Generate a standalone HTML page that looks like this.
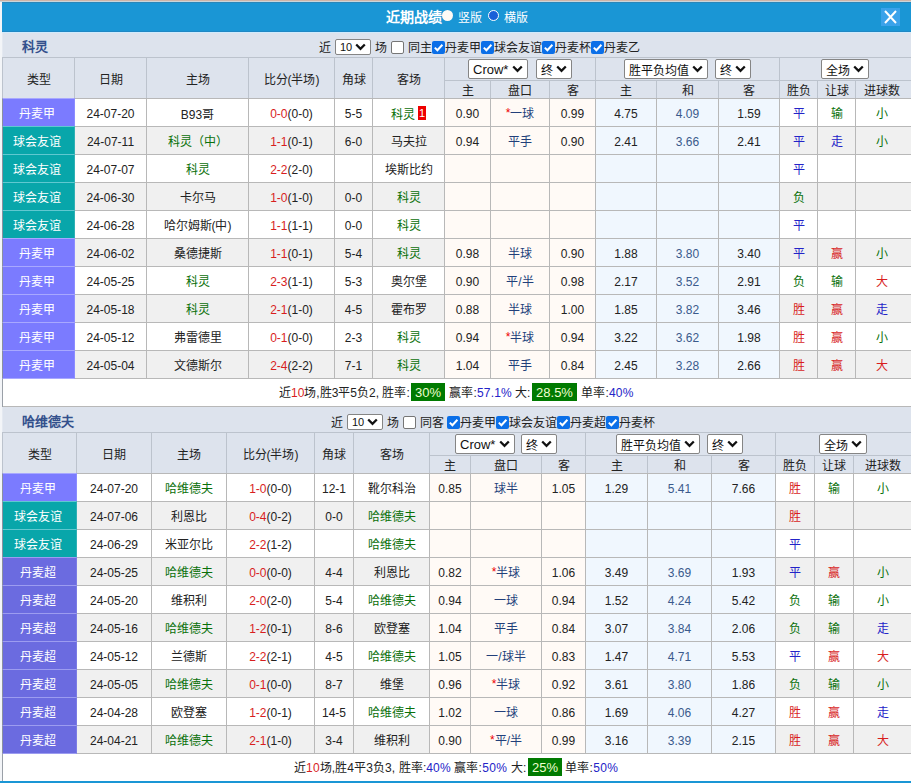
<!DOCTYPE html><html lang="zh-CN"><head><meta charset="utf-8"><style>
*{margin:0;padding:0;box-sizing:border-box}
html,body{width:911px;height:783px;overflow:hidden;background:#f3f5f8}
body{position:relative;font-family:"Liberation Sans",sans-serif;font-size:12px;color:#222}
.c{position:absolute;display:flex;align-items:center;justify-content:center;white-space:nowrap;border:1px solid #b8b8b8}
.d{padding-top:2px}
.h{background:#dde3ed;color:#222;font-size:12px;border-color:#bcc3cd}
.t1{background:#7b7bff;color:#fff;font-size:12px;border-color:#a8a8ff #8c8cff #a8a8ff #8a90a0;padding-right:3px}
.t2{background:#08a6aa;color:#fff;font-size:12px;border-color:#60c8d0 #30b0b4 #60c8d0 #8a90a0;padding-right:3px}
.t3{background:#6b6be0;color:#fff;font-size:12px;border-color:#9c9cf0 #7c7ce4 #9c9cf0 #8a90a0;padding-right:3px}
.w{background:#fff}
.g{background:#f0f0f0}
.ow{background:#fffaf6}
.ob{background:#f0f7fe}
.r{color:#d81e1e}
.gr{color:#0a700a}
.bl{color:#2323c8}
.pk{color:#223f7a}
.he{color:#3a5a8c}
.blk{position:absolute}
.sel{position:absolute;background:#fff;border:1px solid #858585;border-radius:2px;font-size:13px;color:#111;display:flex;align-items:center;padding-left:4px}
.sel svg{position:absolute;right:4px;top:50%;margin-top:-4px}
.cb{position:absolute;width:13px;height:13px;border-radius:2px}
.cb.on{background:#0b6fe8}
.cb.off{background:#fff;border:1px solid #767676}
.txt{position:absolute;white-space:nowrap;font-size:12px;color:#222;line-height:16px}
.badge{position:absolute;background:#007a00;color:#efffd0;font-size:13px;padding-top:1px;display:flex;align-items:center;justify-content:center}
</style></head><body><div class="blk" style="left:0;top:0;width:911px;height:1px;background:#d0b4a6"></div>
<div class="blk" style="left:0;top:1px;width:911px;height:1px;background:#c8d6dc"></div>
<div class="blk" style="left:2px;top:2px;width:909px;height:30px;background:#1a96d5;border-top:1px solid #2a86b8;border-bottom:1px solid #2088c4"></div>
<div class="blk" style="left:2px;top:32px;width:909px;height:1px;background:#d0ebfd"></div>
<div class="txt" style="left:386px;top:9px;font-weight:bold;color:#fff;font-size:14px">近期战绩</div>
<div class="blk" style="left:442px;top:10px;width:11px;height:11px;border-radius:50%;background:#fffaf5"></div>
<div class="txt" style="left:458px;top:10px;color:#fff;font-size:12px">竖版</div>
<div class="blk" style="left:488px;top:9.5px;width:11px;height:11px;border-radius:50%;background:#1a60d8;border:1.6px solid #fff"></div>
<div class="txt" style="left:504px;top:10px;color:#fff;font-size:12px">横版</div>
<div class="blk" style="left:881px;top:8px;width:19px;height:18px;background:#3aa2ea"></div>
<svg class="blk" style="left:881px;top:8px" width="19" height="18" viewBox="0 0 19 18"><path d="M4 3 L15 15 M15 3 L4 15" stroke="#fff" stroke-width="2"/></svg>
<div class="blk" style="left:2px;top:57px;width:1px;height:724px;background:#9aa0a8"></div>
<div class="blk" style="left:2px;top:33px;width:909px;height:24px;background:#dde3ed;border-left:1px solid #e4e9f1"></div>
<div class="txt" style="left:22px;top:39px;font-weight:bold;color:#33508c;font-size:13px">科灵</div>
<div class="txt" style="left:319px;top:40px;">近</div>
<div class="sel" style="left:335px;top:39px;width:36px;height:16px;font-size:11px">10<svg width="11" height="8" viewBox="0 0 11 8"><path d="M1.2 1.5 L5.5 5.8 L9.8 1.5" stroke="#111" stroke-width="2.3" fill="none"/></svg></div>
<div class="txt" style="left:375px;top:40px;">场</div>
<div class="cb off" style="left:391px;top:41px"></div>
<div class="txt" style="left:408px;top:40px;">同主</div>
<div class="cb on" style="left:432px;top:41px"><svg width="13" height="13" viewBox="0 0 13 13" style="position:absolute;left:0;top:0"><path d="M2.8 6.6 L5.4 9.2 L10.4 3.8" stroke="#fff" stroke-width="2" fill="none"/></svg></div>
<div class="txt" style="left:445px;top:40px;">丹麦甲</div>
<div class="cb on" style="left:481px;top:41px"><svg width="13" height="13" viewBox="0 0 13 13" style="position:absolute;left:0;top:0"><path d="M2.8 6.6 L5.4 9.2 L10.4 3.8" stroke="#fff" stroke-width="2" fill="none"/></svg></div>
<div class="txt" style="left:494px;top:40px;">球会友谊</div>
<div class="cb on" style="left:542px;top:41px"><svg width="13" height="13" viewBox="0 0 13 13" style="position:absolute;left:0;top:0"><path d="M2.8 6.6 L5.4 9.2 L10.4 3.8" stroke="#fff" stroke-width="2" fill="none"/></svg></div>
<div class="txt" style="left:555px;top:40px;">丹麦杯</div>
<div class="cb on" style="left:591px;top:41px"><svg width="13" height="13" viewBox="0 0 13 13" style="position:absolute;left:0;top:0"><path d="M2.8 6.6 L5.4 9.2 L10.4 3.8" stroke="#fff" stroke-width="2" fill="none"/></svg></div>
<div class="txt" style="left:604px;top:40px;">丹麦乙</div>
<div class="c h" style="left:2px;top:57px;width:73px;height:42px;">类型</div>
<div class="c h" style="left:74px;top:57px;width:73px;height:42px;">日期</div>
<div class="c h" style="left:146px;top:57px;width:103px;height:42px;">主场</div>
<div class="c h" style="left:248px;top:57px;width:87px;height:42px;">比分(半场)</div>
<div class="c h" style="left:334px;top:57px;width:39px;height:42px;">角球</div>
<div class="c h" style="left:372px;top:57px;width:73px;height:42px;">客场</div>
<div class="c h" style="left:444px;top:57px;width:152px;height:24px;"></div>
<div class="c h" style="left:595px;top:57px;width:185px;height:24px;"></div>
<div class="c h" style="left:779px;top:57px;width:133px;height:24px;"></div>
<div class="c h" style="left:444px;top:80px;width:47px;height:19px;">主</div>
<div class="c h" style="left:490px;top:80px;width:60px;height:19px;">盘口</div>
<div class="c h" style="left:549px;top:80px;width:47px;height:19px;">客</div>
<div class="c h" style="left:595px;top:80px;width:62px;height:19px;">主</div>
<div class="c h" style="left:656px;top:80px;width:63px;height:19px;">和</div>
<div class="c h" style="left:718px;top:80px;width:62px;height:19px;">客</div>
<div class="c h" style="left:779px;top:80px;width:39px;height:19px;">胜负</div>
<div class="c h" style="left:817px;top:80px;width:39px;height:19px;">让球</div>
<div class="c h" style="left:855px;top:80px;width:57px;height:19px;padding-right:3px">进球数</div>
<div class="sel" style="left:468px;top:59px;width:60px;height:20px;font-size:13px">Crow*<svg width="11" height="8" viewBox="0 0 11 8"><path d="M1.2 1.5 L5.5 5.8 L9.8 1.5" stroke="#111" stroke-width="2.3" fill="none"/></svg></div>
<div class="sel" style="left:536px;top:59px;width:36px;height:20px;font-size:12px">终<svg width="11" height="8" viewBox="0 0 11 8"><path d="M1.2 1.5 L5.5 5.8 L9.8 1.5" stroke="#111" stroke-width="2.3" fill="none"/></svg></div>
<div class="sel" style="left:624px;top:59px;width:84px;height:20px;font-size:12px">胜平负均值<svg width="11" height="8" viewBox="0 0 11 8"><path d="M1.2 1.5 L5.5 5.8 L9.8 1.5" stroke="#111" stroke-width="2.3" fill="none"/></svg></div>
<div class="sel" style="left:715px;top:59px;width:36px;height:20px;font-size:12px">终<svg width="11" height="8" viewBox="0 0 11 8"><path d="M1.2 1.5 L5.5 5.8 L9.8 1.5" stroke="#111" stroke-width="2.3" fill="none"/></svg></div>
<div class="sel" style="left:821px;top:59px;width:48px;height:20px;font-size:12px">全场<svg width="11" height="8" viewBox="0 0 11 8"><path d="M1.2 1.5 L5.5 5.8 L9.8 1.5" stroke="#111" stroke-width="2.3" fill="none"/></svg></div>
<div class="c w d" style="left:74px;top:98px;width:73px;height:29px;">24-07-20</div>
<div class="c w d" style="left:146px;top:98px;width:103px;height:29px;">B93哥</div>
<div class="c w d" style="left:248px;top:98px;width:87px;height:29px;"><span class="r">0-0</span>(0-0)</div>
<div class="c w d" style="left:334px;top:98px;width:39px;height:29px;">5-5</div>
<div class="c w d" style="left:372px;top:98px;width:73px;height:29px;"><span class="gr">科灵</span><span style="display:inline-block;background:#e00;color:#fff;font-size:11px;line-height:14px;width:8px;text-align:center;margin-left:3px;position:relative;top:-1px">1</span></div>
<div class="c ow d" style="left:444px;top:98px;width:47px;height:29px;">0.90</div>
<div class="c ow" style="left:490px;top:98px;width:60px;height:29px;"><span style="color:#e00">*</span><span class="pk">一球</span></div>
<div class="c ow d" style="left:549px;top:98px;width:47px;height:29px;">0.99</div>
<div class="c ob d" style="left:595px;top:98px;width:62px;height:29px;">4.75</div>
<div class="c ob d" style="left:656px;top:98px;width:63px;height:29px;"><span class="he">4.09</span></div>
<div class="c ob d" style="left:718px;top:98px;width:62px;height:29px;">1.59</div>
<div class="c w" style="left:779px;top:98px;width:39px;height:29px;"><span class="bl">平</span></div>
<div class="c w" style="left:817px;top:98px;width:39px;height:29px;"><span class="gr">输</span></div>
<div class="c w" style="left:855px;top:98px;width:57px;height:29px;padding-right:3px"><span class="gr">小</span></div>
<div class="c t1" style="left:2px;top:98px;width:73px;height:29px;">丹麦甲</div>
<div class="c g d" style="left:74px;top:126px;width:73px;height:29px;">24-07-11</div>
<div class="c g" style="left:146px;top:126px;width:103px;height:29px;"><span class="gr">科灵（中）</span></div>
<div class="c g d" style="left:248px;top:126px;width:87px;height:29px;"><span class="r">1-1</span>(0-1)</div>
<div class="c g d" style="left:334px;top:126px;width:39px;height:29px;">6-0</div>
<div class="c g" style="left:372px;top:126px;width:73px;height:29px;">马夫拉</div>
<div class="c ow d" style="left:444px;top:126px;width:47px;height:29px;">0.94</div>
<div class="c ow" style="left:490px;top:126px;width:60px;height:29px;"><span class="pk">平手</span></div>
<div class="c ow d" style="left:549px;top:126px;width:47px;height:29px;">0.90</div>
<div class="c ob d" style="left:595px;top:126px;width:62px;height:29px;">2.41</div>
<div class="c ob d" style="left:656px;top:126px;width:63px;height:29px;"><span class="he">3.66</span></div>
<div class="c ob d" style="left:718px;top:126px;width:62px;height:29px;">2.41</div>
<div class="c g" style="left:779px;top:126px;width:39px;height:29px;"><span class="bl">平</span></div>
<div class="c g" style="left:817px;top:126px;width:39px;height:29px;"><span class="bl">走</span></div>
<div class="c g" style="left:855px;top:126px;width:57px;height:29px;padding-right:3px"><span class="gr">小</span></div>
<div class="c t2" style="left:2px;top:126px;width:73px;height:29px;">球会友谊</div>
<div class="c w d" style="left:74px;top:154px;width:73px;height:29px;">24-07-07</div>
<div class="c w" style="left:146px;top:154px;width:103px;height:29px;"><span class="gr">科灵</span></div>
<div class="c w d" style="left:248px;top:154px;width:87px;height:29px;"><span class="r">2-2</span>(2-0)</div>
<div class="c w" style="left:334px;top:154px;width:39px;height:29px;"></div>
<div class="c w" style="left:372px;top:154px;width:73px;height:29px;">埃斯比约</div>
<div class="c ow" style="left:444px;top:154px;width:47px;height:29px;"></div>
<div class="c ow" style="left:490px;top:154px;width:60px;height:29px;"></div>
<div class="c ow" style="left:549px;top:154px;width:47px;height:29px;"></div>
<div class="c ob" style="left:595px;top:154px;width:62px;height:29px;"></div>
<div class="c ob" style="left:656px;top:154px;width:63px;height:29px;"></div>
<div class="c ob" style="left:718px;top:154px;width:62px;height:29px;"></div>
<div class="c w" style="left:779px;top:154px;width:39px;height:29px;"><span class="bl">平</span></div>
<div class="c w" style="left:817px;top:154px;width:39px;height:29px;"></div>
<div class="c w" style="left:855px;top:154px;width:57px;height:29px;padding-right:3px"></div>
<div class="c t2" style="left:2px;top:154px;width:73px;height:29px;">球会友谊</div>
<div class="c g d" style="left:74px;top:182px;width:73px;height:29px;">24-06-30</div>
<div class="c g" style="left:146px;top:182px;width:103px;height:29px;">卡尔马</div>
<div class="c g d" style="left:248px;top:182px;width:87px;height:29px;"><span class="r">1-0</span>(1-0)</div>
<div class="c g d" style="left:334px;top:182px;width:39px;height:29px;">0-0</div>
<div class="c g" style="left:372px;top:182px;width:73px;height:29px;"><span class="gr">科灵</span></div>
<div class="c ow" style="left:444px;top:182px;width:47px;height:29px;"></div>
<div class="c ow" style="left:490px;top:182px;width:60px;height:29px;"></div>
<div class="c ow" style="left:549px;top:182px;width:47px;height:29px;"></div>
<div class="c ob" style="left:595px;top:182px;width:62px;height:29px;"></div>
<div class="c ob" style="left:656px;top:182px;width:63px;height:29px;"></div>
<div class="c ob" style="left:718px;top:182px;width:62px;height:29px;"></div>
<div class="c g" style="left:779px;top:182px;width:39px;height:29px;"><span class="gr">负</span></div>
<div class="c g" style="left:817px;top:182px;width:39px;height:29px;"></div>
<div class="c g" style="left:855px;top:182px;width:57px;height:29px;padding-right:3px"></div>
<div class="c t2" style="left:2px;top:182px;width:73px;height:29px;">球会友谊</div>
<div class="c w d" style="left:74px;top:210px;width:73px;height:29px;">24-06-28</div>
<div class="c w" style="left:146px;top:210px;width:103px;height:29px;">哈尔姆斯(中)</div>
<div class="c w d" style="left:248px;top:210px;width:87px;height:29px;"><span class="r">1-1</span>(1-1)</div>
<div class="c w d" style="left:334px;top:210px;width:39px;height:29px;">0-0</div>
<div class="c w" style="left:372px;top:210px;width:73px;height:29px;"><span class="gr">科灵</span></div>
<div class="c ow" style="left:444px;top:210px;width:47px;height:29px;"></div>
<div class="c ow" style="left:490px;top:210px;width:60px;height:29px;"></div>
<div class="c ow" style="left:549px;top:210px;width:47px;height:29px;"></div>
<div class="c ob" style="left:595px;top:210px;width:62px;height:29px;"></div>
<div class="c ob" style="left:656px;top:210px;width:63px;height:29px;"></div>
<div class="c ob" style="left:718px;top:210px;width:62px;height:29px;"></div>
<div class="c w" style="left:779px;top:210px;width:39px;height:29px;"><span class="bl">平</span></div>
<div class="c w" style="left:817px;top:210px;width:39px;height:29px;"></div>
<div class="c w" style="left:855px;top:210px;width:57px;height:29px;padding-right:3px"></div>
<div class="c t2" style="left:2px;top:210px;width:73px;height:29px;">球会友谊</div>
<div class="c g d" style="left:74px;top:238px;width:73px;height:29px;">24-06-02</div>
<div class="c g" style="left:146px;top:238px;width:103px;height:29px;">桑德捷斯</div>
<div class="c g d" style="left:248px;top:238px;width:87px;height:29px;"><span class="r">1-1</span>(0-1)</div>
<div class="c g d" style="left:334px;top:238px;width:39px;height:29px;">5-4</div>
<div class="c g" style="left:372px;top:238px;width:73px;height:29px;"><span class="gr">科灵</span></div>
<div class="c ow d" style="left:444px;top:238px;width:47px;height:29px;">0.98</div>
<div class="c ow" style="left:490px;top:238px;width:60px;height:29px;"><span class="pk">半球</span></div>
<div class="c ow d" style="left:549px;top:238px;width:47px;height:29px;">0.90</div>
<div class="c ob d" style="left:595px;top:238px;width:62px;height:29px;">1.88</div>
<div class="c ob d" style="left:656px;top:238px;width:63px;height:29px;"><span class="he">3.80</span></div>
<div class="c ob d" style="left:718px;top:238px;width:62px;height:29px;">3.40</div>
<div class="c g" style="left:779px;top:238px;width:39px;height:29px;"><span class="bl">平</span></div>
<div class="c g" style="left:817px;top:238px;width:39px;height:29px;"><span class="r">赢</span></div>
<div class="c g" style="left:855px;top:238px;width:57px;height:29px;padding-right:3px"><span class="gr">小</span></div>
<div class="c t1" style="left:2px;top:238px;width:73px;height:29px;">丹麦甲</div>
<div class="c w d" style="left:74px;top:266px;width:73px;height:29px;">24-05-25</div>
<div class="c w" style="left:146px;top:266px;width:103px;height:29px;"><span class="gr">科灵</span></div>
<div class="c w d" style="left:248px;top:266px;width:87px;height:29px;"><span class="r">2-3</span>(1-1)</div>
<div class="c w d" style="left:334px;top:266px;width:39px;height:29px;">5-3</div>
<div class="c w" style="left:372px;top:266px;width:73px;height:29px;">奥尔堡</div>
<div class="c ow d" style="left:444px;top:266px;width:47px;height:29px;">0.90</div>
<div class="c ow" style="left:490px;top:266px;width:60px;height:29px;"><span class="pk">平/半</span></div>
<div class="c ow d" style="left:549px;top:266px;width:47px;height:29px;">0.98</div>
<div class="c ob d" style="left:595px;top:266px;width:62px;height:29px;">2.17</div>
<div class="c ob d" style="left:656px;top:266px;width:63px;height:29px;"><span class="he">3.52</span></div>
<div class="c ob d" style="left:718px;top:266px;width:62px;height:29px;">2.91</div>
<div class="c w" style="left:779px;top:266px;width:39px;height:29px;"><span class="gr">负</span></div>
<div class="c w" style="left:817px;top:266px;width:39px;height:29px;"><span class="gr">输</span></div>
<div class="c w" style="left:855px;top:266px;width:57px;height:29px;padding-right:3px"><span class="r">大</span></div>
<div class="c t1" style="left:2px;top:266px;width:73px;height:29px;">丹麦甲</div>
<div class="c g d" style="left:74px;top:294px;width:73px;height:29px;">24-05-18</div>
<div class="c g" style="left:146px;top:294px;width:103px;height:29px;"><span class="gr">科灵</span></div>
<div class="c g d" style="left:248px;top:294px;width:87px;height:29px;"><span class="r">2-1</span>(1-0)</div>
<div class="c g d" style="left:334px;top:294px;width:39px;height:29px;">4-5</div>
<div class="c g" style="left:372px;top:294px;width:73px;height:29px;">霍布罗</div>
<div class="c ow d" style="left:444px;top:294px;width:47px;height:29px;">0.88</div>
<div class="c ow" style="left:490px;top:294px;width:60px;height:29px;"><span class="pk">半球</span></div>
<div class="c ow d" style="left:549px;top:294px;width:47px;height:29px;">1.00</div>
<div class="c ob d" style="left:595px;top:294px;width:62px;height:29px;">1.85</div>
<div class="c ob d" style="left:656px;top:294px;width:63px;height:29px;"><span class="he">3.82</span></div>
<div class="c ob d" style="left:718px;top:294px;width:62px;height:29px;">3.46</div>
<div class="c g" style="left:779px;top:294px;width:39px;height:29px;"><span class="r">胜</span></div>
<div class="c g" style="left:817px;top:294px;width:39px;height:29px;"><span class="r">赢</span></div>
<div class="c g" style="left:855px;top:294px;width:57px;height:29px;padding-right:3px"><span class="bl">走</span></div>
<div class="c t1" style="left:2px;top:294px;width:73px;height:29px;">丹麦甲</div>
<div class="c w d" style="left:74px;top:322px;width:73px;height:29px;">24-05-12</div>
<div class="c w" style="left:146px;top:322px;width:103px;height:29px;">弗雷德里</div>
<div class="c w d" style="left:248px;top:322px;width:87px;height:29px;"><span class="r">0-1</span>(0-0)</div>
<div class="c w d" style="left:334px;top:322px;width:39px;height:29px;">2-3</div>
<div class="c w" style="left:372px;top:322px;width:73px;height:29px;"><span class="gr">科灵</span></div>
<div class="c ow d" style="left:444px;top:322px;width:47px;height:29px;">0.94</div>
<div class="c ow" style="left:490px;top:322px;width:60px;height:29px;"><span style="color:#e00">*</span><span class="pk">半球</span></div>
<div class="c ow d" style="left:549px;top:322px;width:47px;height:29px;">0.94</div>
<div class="c ob d" style="left:595px;top:322px;width:62px;height:29px;">3.22</div>
<div class="c ob d" style="left:656px;top:322px;width:63px;height:29px;"><span class="he">3.62</span></div>
<div class="c ob d" style="left:718px;top:322px;width:62px;height:29px;">1.98</div>
<div class="c w" style="left:779px;top:322px;width:39px;height:29px;"><span class="r">胜</span></div>
<div class="c w" style="left:817px;top:322px;width:39px;height:29px;"><span class="r">赢</span></div>
<div class="c w" style="left:855px;top:322px;width:57px;height:29px;padding-right:3px"><span class="gr">小</span></div>
<div class="c t1" style="left:2px;top:322px;width:73px;height:29px;">丹麦甲</div>
<div class="c g d" style="left:74px;top:350px;width:73px;height:29px;">24-05-04</div>
<div class="c g" style="left:146px;top:350px;width:103px;height:29px;">文德斯尔</div>
<div class="c g d" style="left:248px;top:350px;width:87px;height:29px;"><span class="r">2-4</span>(2-2)</div>
<div class="c g d" style="left:334px;top:350px;width:39px;height:29px;">7-1</div>
<div class="c g" style="left:372px;top:350px;width:73px;height:29px;"><span class="gr">科灵</span></div>
<div class="c ow d" style="left:444px;top:350px;width:47px;height:29px;">1.04</div>
<div class="c ow" style="left:490px;top:350px;width:60px;height:29px;"><span class="pk">平手</span></div>
<div class="c ow d" style="left:549px;top:350px;width:47px;height:29px;">0.84</div>
<div class="c ob d" style="left:595px;top:350px;width:62px;height:29px;">2.45</div>
<div class="c ob d" style="left:656px;top:350px;width:63px;height:29px;"><span class="he">3.28</span></div>
<div class="c ob d" style="left:718px;top:350px;width:62px;height:29px;">2.66</div>
<div class="c g" style="left:779px;top:350px;width:39px;height:29px;"><span class="r">胜</span></div>
<div class="c g" style="left:817px;top:350px;width:39px;height:29px;"><span class="r">赢</span></div>
<div class="c g" style="left:855px;top:350px;width:57px;height:29px;padding-right:3px"><span class="r">大</span></div>
<div class="c t1" style="left:2px;top:350px;width:73px;height:29px;">丹麦甲</div>
<div class="blk" style="left:3px;top:379px;width:908px;height:28px;background:#fff;border-bottom:1px solid #b8b8b8"></div>
<div class="txt" style="left:279px;top:385px">近<span class="r">10</span>场,胜3平5负2, 胜率:</div>
<div class="badge" style="left:411px;top:383px;width:34px;height:18px">30%</div>
<div class="txt" style="left:449px;top:385px;letter-spacing:0.2px">赢率:<span class="bl">57.1%</span></div>
<div class="txt" style="left:515px;top:385px">大:</div>
<div class="badge" style="left:532px;top:383px;width:45px;height:18px">28.5%</div>
<div class="txt" style="left:581px;top:385px;letter-spacing:0.2px">单率:<span class="bl">40%</span></div>
<div class="blk" style="left:2px;top:407px;width:909px;height:25px;background:#dde3ed;border-left:1px solid #e4e9f1"></div>
<div class="txt" style="left:22px;top:414px;font-weight:bold;color:#33508c;font-size:13px">哈维德夫</div>
<div class="txt" style="left:331px;top:415px;">近</div>
<div class="sel" style="left:347px;top:414px;width:36px;height:16px;font-size:11px">10<svg width="11" height="8" viewBox="0 0 11 8"><path d="M1.2 1.5 L5.5 5.8 L9.8 1.5" stroke="#111" stroke-width="2.3" fill="none"/></svg></div>
<div class="txt" style="left:387px;top:415px;">场</div>
<div class="cb off" style="left:403px;top:416px"></div>
<div class="txt" style="left:420px;top:415px;">同客</div>
<div class="cb on" style="left:447px;top:416px"><svg width="13" height="13" viewBox="0 0 13 13" style="position:absolute;left:0;top:0"><path d="M2.8 6.6 L5.4 9.2 L10.4 3.8" stroke="#fff" stroke-width="2" fill="none"/></svg></div>
<div class="txt" style="left:460px;top:415px;">丹麦甲</div>
<div class="cb on" style="left:496px;top:416px"><svg width="13" height="13" viewBox="0 0 13 13" style="position:absolute;left:0;top:0"><path d="M2.8 6.6 L5.4 9.2 L10.4 3.8" stroke="#fff" stroke-width="2" fill="none"/></svg></div>
<div class="txt" style="left:509px;top:415px;">球会友谊</div>
<div class="cb on" style="left:557px;top:416px"><svg width="13" height="13" viewBox="0 0 13 13" style="position:absolute;left:0;top:0"><path d="M2.8 6.6 L5.4 9.2 L10.4 3.8" stroke="#fff" stroke-width="2" fill="none"/></svg></div>
<div class="txt" style="left:570px;top:415px;">丹麦超</div>
<div class="cb on" style="left:606px;top:416px"><svg width="13" height="13" viewBox="0 0 13 13" style="position:absolute;left:0;top:0"><path d="M2.8 6.6 L5.4 9.2 L10.4 3.8" stroke="#fff" stroke-width="2" fill="none"/></svg></div>
<div class="txt" style="left:619px;top:415px;">丹麦杯</div>
<div class="c h" style="left:2px;top:432px;width:75px;height:42px;">类型</div>
<div class="c h" style="left:76px;top:432px;width:76px;height:42px;">日期</div>
<div class="c h" style="left:151px;top:432px;width:76px;height:42px;">主场</div>
<div class="c h" style="left:226px;top:432px;width:89px;height:42px;">比分(半场)</div>
<div class="c h" style="left:314px;top:432px;width:40px;height:42px;">角球</div>
<div class="c h" style="left:353px;top:432px;width:77px;height:42px;">客场</div>
<div class="c h" style="left:429px;top:432px;width:157px;height:24px;"></div>
<div class="c h" style="left:585px;top:432px;width:191px;height:24px;"></div>
<div class="c h" style="left:775px;top:432px;width:137px;height:24px;"></div>
<div class="c h" style="left:429px;top:455px;width:42px;height:19px;">主</div>
<div class="c h" style="left:470px;top:455px;width:72px;height:19px;">盘口</div>
<div class="c h" style="left:541px;top:455px;width:45px;height:19px;">客</div>
<div class="c h" style="left:585px;top:455px;width:63px;height:19px;">主</div>
<div class="c h" style="left:647px;top:455px;width:65px;height:19px;">和</div>
<div class="c h" style="left:711px;top:455px;width:65px;height:19px;">客</div>
<div class="c h" style="left:775px;top:455px;width:40px;height:19px;">胜负</div>
<div class="c h" style="left:814px;top:455px;width:40px;height:19px;">让球</div>
<div class="c h" style="left:853px;top:455px;width:59px;height:19px;padding-right:0px">进球数</div>
<div class="sel" style="left:455px;top:434px;width:60px;height:20px;font-size:13px">Crow*<svg width="11" height="8" viewBox="0 0 11 8"><path d="M1.2 1.5 L5.5 5.8 L9.8 1.5" stroke="#111" stroke-width="2.3" fill="none"/></svg></div>
<div class="sel" style="left:521px;top:434px;width:36px;height:20px;font-size:12px">终<svg width="11" height="8" viewBox="0 0 11 8"><path d="M1.2 1.5 L5.5 5.8 L9.8 1.5" stroke="#111" stroke-width="2.3" fill="none"/></svg></div>
<div class="sel" style="left:616px;top:434px;width:84px;height:20px;font-size:12px">胜平负均值<svg width="11" height="8" viewBox="0 0 11 8"><path d="M1.2 1.5 L5.5 5.8 L9.8 1.5" stroke="#111" stroke-width="2.3" fill="none"/></svg></div>
<div class="sel" style="left:707px;top:434px;width:36px;height:20px;font-size:12px">终<svg width="11" height="8" viewBox="0 0 11 8"><path d="M1.2 1.5 L5.5 5.8 L9.8 1.5" stroke="#111" stroke-width="2.3" fill="none"/></svg></div>
<div class="sel" style="left:819px;top:434px;width:48px;height:20px;font-size:12px">全场<svg width="11" height="8" viewBox="0 0 11 8"><path d="M1.2 1.5 L5.5 5.8 L9.8 1.5" stroke="#111" stroke-width="2.3" fill="none"/></svg></div>
<div class="c w d" style="left:76px;top:473px;width:76px;height:29px;">24-07-20</div>
<div class="c w" style="left:151px;top:473px;width:76px;height:29px;"><span class="gr">哈维德夫</span></div>
<div class="c w d" style="left:226px;top:473px;width:89px;height:29px;"><span class="r">1-0</span>(0-0)</div>
<div class="c w d" style="left:314px;top:473px;width:40px;height:29px;">12-1</div>
<div class="c w" style="left:353px;top:473px;width:77px;height:29px;">靴尔科治</div>
<div class="c ow d" style="left:429px;top:473px;width:42px;height:29px;">0.85</div>
<div class="c ow" style="left:470px;top:473px;width:72px;height:29px;"><span class="pk">球半</span></div>
<div class="c ow d" style="left:541px;top:473px;width:45px;height:29px;">1.05</div>
<div class="c ob d" style="left:585px;top:473px;width:63px;height:29px;">1.29</div>
<div class="c ob d" style="left:647px;top:473px;width:65px;height:29px;"><span class="he">5.41</span></div>
<div class="c ob d" style="left:711px;top:473px;width:65px;height:29px;">7.66</div>
<div class="c w" style="left:775px;top:473px;width:40px;height:29px;"><span class="r">胜</span></div>
<div class="c w" style="left:814px;top:473px;width:40px;height:29px;"><span class="gr">输</span></div>
<div class="c w" style="left:853px;top:473px;width:59px;height:29px;padding-right:0px"><span class="gr">小</span></div>
<div class="c t1" style="left:2px;top:473px;width:75px;height:29px;">丹麦甲</div>
<div class="c g d" style="left:76px;top:501px;width:76px;height:29px;">24-07-06</div>
<div class="c g" style="left:151px;top:501px;width:76px;height:29px;">利恩比</div>
<div class="c g d" style="left:226px;top:501px;width:89px;height:29px;"><span class="r">0-4</span>(0-2)</div>
<div class="c g d" style="left:314px;top:501px;width:40px;height:29px;">0-0</div>
<div class="c g" style="left:353px;top:501px;width:77px;height:29px;"><span class="gr">哈维德夫</span></div>
<div class="c ow" style="left:429px;top:501px;width:42px;height:29px;"></div>
<div class="c ow" style="left:470px;top:501px;width:72px;height:29px;"></div>
<div class="c ow" style="left:541px;top:501px;width:45px;height:29px;"></div>
<div class="c ob" style="left:585px;top:501px;width:63px;height:29px;"></div>
<div class="c ob" style="left:647px;top:501px;width:65px;height:29px;"></div>
<div class="c ob" style="left:711px;top:501px;width:65px;height:29px;"></div>
<div class="c g" style="left:775px;top:501px;width:40px;height:29px;"><span class="r">胜</span></div>
<div class="c g" style="left:814px;top:501px;width:40px;height:29px;"></div>
<div class="c g" style="left:853px;top:501px;width:59px;height:29px;padding-right:0px"></div>
<div class="c t2" style="left:2px;top:501px;width:75px;height:29px;">球会友谊</div>
<div class="c w d" style="left:76px;top:529px;width:76px;height:29px;">24-06-29</div>
<div class="c w" style="left:151px;top:529px;width:76px;height:29px;">米亚尔比</div>
<div class="c w d" style="left:226px;top:529px;width:89px;height:29px;"><span class="r">2-2</span>(1-2)</div>
<div class="c w" style="left:314px;top:529px;width:40px;height:29px;"></div>
<div class="c w" style="left:353px;top:529px;width:77px;height:29px;"><span class="gr">哈维德夫</span></div>
<div class="c ow" style="left:429px;top:529px;width:42px;height:29px;"></div>
<div class="c ow" style="left:470px;top:529px;width:72px;height:29px;"></div>
<div class="c ow" style="left:541px;top:529px;width:45px;height:29px;"></div>
<div class="c ob" style="left:585px;top:529px;width:63px;height:29px;"></div>
<div class="c ob" style="left:647px;top:529px;width:65px;height:29px;"></div>
<div class="c ob" style="left:711px;top:529px;width:65px;height:29px;"></div>
<div class="c w" style="left:775px;top:529px;width:40px;height:29px;"><span class="bl">平</span></div>
<div class="c w" style="left:814px;top:529px;width:40px;height:29px;"></div>
<div class="c w" style="left:853px;top:529px;width:59px;height:29px;padding-right:0px"></div>
<div class="c t2" style="left:2px;top:529px;width:75px;height:29px;">球会友谊</div>
<div class="c g d" style="left:76px;top:557px;width:76px;height:29px;">24-05-25</div>
<div class="c g" style="left:151px;top:557px;width:76px;height:29px;"><span class="gr">哈维德夫</span></div>
<div class="c g d" style="left:226px;top:557px;width:89px;height:29px;"><span class="r">0-0</span>(0-0)</div>
<div class="c g d" style="left:314px;top:557px;width:40px;height:29px;">4-4</div>
<div class="c g" style="left:353px;top:557px;width:77px;height:29px;">利恩比</div>
<div class="c ow d" style="left:429px;top:557px;width:42px;height:29px;">0.82</div>
<div class="c ow" style="left:470px;top:557px;width:72px;height:29px;"><span style="color:#e00">*</span><span class="pk">半球</span></div>
<div class="c ow d" style="left:541px;top:557px;width:45px;height:29px;">1.06</div>
<div class="c ob d" style="left:585px;top:557px;width:63px;height:29px;">3.49</div>
<div class="c ob d" style="left:647px;top:557px;width:65px;height:29px;"><span class="he">3.69</span></div>
<div class="c ob d" style="left:711px;top:557px;width:65px;height:29px;">1.93</div>
<div class="c g" style="left:775px;top:557px;width:40px;height:29px;"><span class="bl">平</span></div>
<div class="c g" style="left:814px;top:557px;width:40px;height:29px;"><span class="r">赢</span></div>
<div class="c g" style="left:853px;top:557px;width:59px;height:29px;padding-right:0px"><span class="gr">小</span></div>
<div class="c t3" style="left:2px;top:557px;width:75px;height:29px;">丹麦超</div>
<div class="c w d" style="left:76px;top:585px;width:76px;height:29px;">24-05-20</div>
<div class="c w" style="left:151px;top:585px;width:76px;height:29px;">维积利</div>
<div class="c w d" style="left:226px;top:585px;width:89px;height:29px;"><span class="r">2-0</span>(2-0)</div>
<div class="c w d" style="left:314px;top:585px;width:40px;height:29px;">5-4</div>
<div class="c w" style="left:353px;top:585px;width:77px;height:29px;"><span class="gr">哈维德夫</span></div>
<div class="c ow d" style="left:429px;top:585px;width:42px;height:29px;">0.94</div>
<div class="c ow" style="left:470px;top:585px;width:72px;height:29px;"><span class="pk">一球</span></div>
<div class="c ow d" style="left:541px;top:585px;width:45px;height:29px;">0.94</div>
<div class="c ob d" style="left:585px;top:585px;width:63px;height:29px;">1.52</div>
<div class="c ob d" style="left:647px;top:585px;width:65px;height:29px;"><span class="he">4.24</span></div>
<div class="c ob d" style="left:711px;top:585px;width:65px;height:29px;">5.42</div>
<div class="c w" style="left:775px;top:585px;width:40px;height:29px;"><span class="gr">负</span></div>
<div class="c w" style="left:814px;top:585px;width:40px;height:29px;"><span class="gr">输</span></div>
<div class="c w" style="left:853px;top:585px;width:59px;height:29px;padding-right:0px"><span class="gr">小</span></div>
<div class="c t3" style="left:2px;top:585px;width:75px;height:29px;">丹麦超</div>
<div class="c g d" style="left:76px;top:613px;width:76px;height:29px;">24-05-16</div>
<div class="c g" style="left:151px;top:613px;width:76px;height:29px;"><span class="gr">哈维德夫</span></div>
<div class="c g d" style="left:226px;top:613px;width:89px;height:29px;"><span class="r">1-2</span>(0-1)</div>
<div class="c g d" style="left:314px;top:613px;width:40px;height:29px;">8-6</div>
<div class="c g" style="left:353px;top:613px;width:77px;height:29px;">欧登塞</div>
<div class="c ow d" style="left:429px;top:613px;width:42px;height:29px;">1.04</div>
<div class="c ow" style="left:470px;top:613px;width:72px;height:29px;"><span class="pk">平手</span></div>
<div class="c ow d" style="left:541px;top:613px;width:45px;height:29px;">0.84</div>
<div class="c ob d" style="left:585px;top:613px;width:63px;height:29px;">3.07</div>
<div class="c ob d" style="left:647px;top:613px;width:65px;height:29px;"><span class="he">3.84</span></div>
<div class="c ob d" style="left:711px;top:613px;width:65px;height:29px;">2.06</div>
<div class="c g" style="left:775px;top:613px;width:40px;height:29px;"><span class="gr">负</span></div>
<div class="c g" style="left:814px;top:613px;width:40px;height:29px;"><span class="gr">输</span></div>
<div class="c g" style="left:853px;top:613px;width:59px;height:29px;padding-right:0px"><span class="bl">走</span></div>
<div class="c t3" style="left:2px;top:613px;width:75px;height:29px;">丹麦超</div>
<div class="c w d" style="left:76px;top:641px;width:76px;height:29px;">24-05-12</div>
<div class="c w" style="left:151px;top:641px;width:76px;height:29px;">兰德斯</div>
<div class="c w d" style="left:226px;top:641px;width:89px;height:29px;"><span class="r">2-2</span>(2-1)</div>
<div class="c w d" style="left:314px;top:641px;width:40px;height:29px;">4-5</div>
<div class="c w" style="left:353px;top:641px;width:77px;height:29px;"><span class="gr">哈维德夫</span></div>
<div class="c ow d" style="left:429px;top:641px;width:42px;height:29px;">1.05</div>
<div class="c ow" style="left:470px;top:641px;width:72px;height:29px;"><span class="pk">一/球半</span></div>
<div class="c ow d" style="left:541px;top:641px;width:45px;height:29px;">0.83</div>
<div class="c ob d" style="left:585px;top:641px;width:63px;height:29px;">1.47</div>
<div class="c ob d" style="left:647px;top:641px;width:65px;height:29px;"><span class="he">4.71</span></div>
<div class="c ob d" style="left:711px;top:641px;width:65px;height:29px;">5.53</div>
<div class="c w" style="left:775px;top:641px;width:40px;height:29px;"><span class="bl">平</span></div>
<div class="c w" style="left:814px;top:641px;width:40px;height:29px;"><span class="r">赢</span></div>
<div class="c w" style="left:853px;top:641px;width:59px;height:29px;padding-right:0px"><span class="r">大</span></div>
<div class="c t3" style="left:2px;top:641px;width:75px;height:29px;">丹麦超</div>
<div class="c g d" style="left:76px;top:669px;width:76px;height:29px;">24-05-05</div>
<div class="c g" style="left:151px;top:669px;width:76px;height:29px;"><span class="gr">哈维德夫</span></div>
<div class="c g d" style="left:226px;top:669px;width:89px;height:29px;"><span class="r">0-1</span>(0-0)</div>
<div class="c g d" style="left:314px;top:669px;width:40px;height:29px;">8-7</div>
<div class="c g" style="left:353px;top:669px;width:77px;height:29px;">维堡</div>
<div class="c ow d" style="left:429px;top:669px;width:42px;height:29px;">0.96</div>
<div class="c ow" style="left:470px;top:669px;width:72px;height:29px;"><span style="color:#e00">*</span><span class="pk">半球</span></div>
<div class="c ow d" style="left:541px;top:669px;width:45px;height:29px;">0.92</div>
<div class="c ob d" style="left:585px;top:669px;width:63px;height:29px;">3.61</div>
<div class="c ob d" style="left:647px;top:669px;width:65px;height:29px;"><span class="he">3.80</span></div>
<div class="c ob d" style="left:711px;top:669px;width:65px;height:29px;">1.86</div>
<div class="c g" style="left:775px;top:669px;width:40px;height:29px;"><span class="gr">负</span></div>
<div class="c g" style="left:814px;top:669px;width:40px;height:29px;"><span class="gr">输</span></div>
<div class="c g" style="left:853px;top:669px;width:59px;height:29px;padding-right:0px"><span class="gr">小</span></div>
<div class="c t3" style="left:2px;top:669px;width:75px;height:29px;">丹麦超</div>
<div class="c w d" style="left:76px;top:697px;width:76px;height:29px;">24-04-28</div>
<div class="c w" style="left:151px;top:697px;width:76px;height:29px;">欧登塞</div>
<div class="c w d" style="left:226px;top:697px;width:89px;height:29px;"><span class="r">1-2</span>(0-1)</div>
<div class="c w d" style="left:314px;top:697px;width:40px;height:29px;">14-5</div>
<div class="c w" style="left:353px;top:697px;width:77px;height:29px;"><span class="gr">哈维德夫</span></div>
<div class="c ow d" style="left:429px;top:697px;width:42px;height:29px;">1.02</div>
<div class="c ow" style="left:470px;top:697px;width:72px;height:29px;"><span class="pk">一球</span></div>
<div class="c ow d" style="left:541px;top:697px;width:45px;height:29px;">0.86</div>
<div class="c ob d" style="left:585px;top:697px;width:63px;height:29px;">1.69</div>
<div class="c ob d" style="left:647px;top:697px;width:65px;height:29px;"><span class="he">4.06</span></div>
<div class="c ob d" style="left:711px;top:697px;width:65px;height:29px;">4.27</div>
<div class="c w" style="left:775px;top:697px;width:40px;height:29px;"><span class="r">胜</span></div>
<div class="c w" style="left:814px;top:697px;width:40px;height:29px;"><span class="r">赢</span></div>
<div class="c w" style="left:853px;top:697px;width:59px;height:29px;padding-right:0px"><span class="bl">走</span></div>
<div class="c t3" style="left:2px;top:697px;width:75px;height:29px;">丹麦超</div>
<div class="c g d" style="left:76px;top:725px;width:76px;height:29px;">24-04-21</div>
<div class="c g" style="left:151px;top:725px;width:76px;height:29px;"><span class="gr">哈维德夫</span></div>
<div class="c g d" style="left:226px;top:725px;width:89px;height:29px;"><span class="r">2-1</span>(1-0)</div>
<div class="c g d" style="left:314px;top:725px;width:40px;height:29px;">3-4</div>
<div class="c g" style="left:353px;top:725px;width:77px;height:29px;">维积利</div>
<div class="c ow d" style="left:429px;top:725px;width:42px;height:29px;">0.90</div>
<div class="c ow" style="left:470px;top:725px;width:72px;height:29px;"><span style="color:#e00">*</span><span class="pk">平/半</span></div>
<div class="c ow d" style="left:541px;top:725px;width:45px;height:29px;">0.99</div>
<div class="c ob d" style="left:585px;top:725px;width:63px;height:29px;">3.16</div>
<div class="c ob d" style="left:647px;top:725px;width:65px;height:29px;"><span class="he">3.39</span></div>
<div class="c ob d" style="left:711px;top:725px;width:65px;height:29px;">2.15</div>
<div class="c g" style="left:775px;top:725px;width:40px;height:29px;"><span class="r">胜</span></div>
<div class="c g" style="left:814px;top:725px;width:40px;height:29px;"><span class="r">赢</span></div>
<div class="c g" style="left:853px;top:725px;width:59px;height:29px;padding-right:0px"><span class="r">大</span></div>
<div class="c t3" style="left:2px;top:725px;width:75px;height:29px;">丹麦超</div>
<div class="blk" style="left:3px;top:754px;width:908px;height:28px;background:#fff;border-bottom:1px solid #b8b8b8"></div>
<div class="txt" style="left:294px;top:760px;letter-spacing:0.1px">近<span class="r">10</span>场,胜4平3负3, 胜率:<span class="bl">40%</span></div>
<div class="txt" style="left:454px;top:760px;letter-spacing:0.3px">赢率:<span class="bl">50%</span></div>
<div class="txt" style="left:511px;top:760px">大:</div>
<div class="badge" style="left:528px;top:758px;width:34px;height:18px">25%</div>
<div class="txt" style="left:565px;top:760px;letter-spacing:0.3px">单率:<span class="bl">50%</span></div>
<div class="blk" style="left:0;top:781px;width:911px;height:2px;background:#1a96d5"></div></body></html>
